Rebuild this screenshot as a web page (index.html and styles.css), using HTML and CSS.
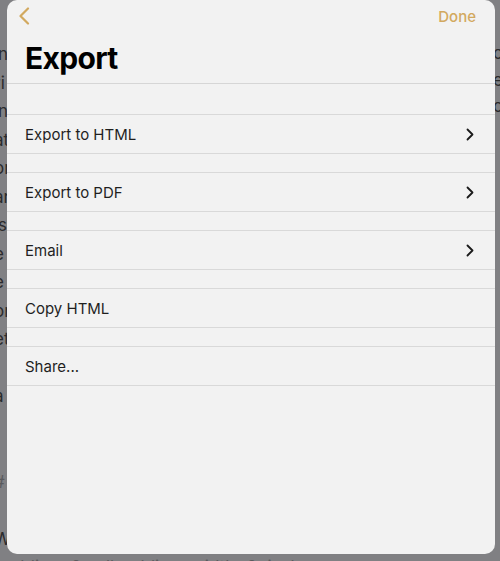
FILE: index.html
```html
<!DOCTYPE html>
<html lang="en">
<head>
    <meta charset="UTF-8">
    <title>Export</title>
    <link rel="stylesheet" href="styles.css">
</head>
<body>
<div class="behind">
    <p class="line">in</p>
    <p class="line">ri</p>
    <p class="line">inf</p>
    <p class="line">at</p>
    <p class="line">or</p>
    <p class="line">ar</p>
    <p class="line">is</p>
    <p class="line">e</p>
    <p class="line">e</p>
    <p class="line">or</p>
    <p class="line">et</p>
    <p class="line blank"></p>
    <p class="line">a</p>
    <p class="line blank"></p>
    <p class="line blank"></p>
    <p class="line faint">#</p>
    <p class="line blank"></p>
    <p class="line">W</p>
    <p class="line faint">padding=0 cellpadding=width=0pixel</p>
</div>
<div class="behind-right">
    <p class="line">o</p>
    <p class="line">e</p>
    <p class="line">c</p>
</div>

<section class="sheet">
    <div class="nav">
        <svg class="back" width="12" height="18" viewBox="0 0 12 18">
            <path d="M10 1.5 L2.5 9 L10 16.5" fill="none" stroke="#d2a95f" stroke-width="2.2" stroke-linecap="round" stroke-linejoin="round"/>
        </svg>
        <span class="done">Done</span>
    </div>
    <h1 class="title">Export</h1>
    <ul class="menu">
        <li class="item">Export to HTML
            <svg class="chev" width="8" height="13" viewBox="0 0 8 13"><path d="M1.5 1.5 L6.5 6.5 L1.5 11.5" fill="none" stroke="#1a1a1a" stroke-width="1.8" stroke-linecap="round" stroke-linejoin="round"/></svg>
        </li>
        <li class="item">Export to PDF
            <svg class="chev" width="8" height="13" viewBox="0 0 8 13"><path d="M1.5 1.5 L6.5 6.5 L1.5 11.5" fill="none" stroke="#1a1a1a" stroke-width="1.8" stroke-linecap="round" stroke-linejoin="round"/></svg>
        </li>
        <li class="item">Email
            <svg class="chev" width="8" height="13" viewBox="0 0 8 13"><path d="M1.5 1.5 L6.5 6.5 L1.5 11.5" fill="none" stroke="#1a1a1a" stroke-width="1.8" stroke-linecap="round" stroke-linejoin="round"/></svg>
        </li>
        <li class="item">Copy HTML</li>
        <li class="item">Share...</li>
    </ul>
</section>
</body>
</html>
```

FILE: styles.css
```css
* {margin:0; padding:0; list-style:none; box-sizing:border-box;}
body {background:#808083; font-family:Inter, "Liberation Sans", sans-serif; overflow:hidden; height:561px;}

/* page under the sheet */
.behind {padding-top:40px; margin-left:-6px; color:#2b2b2d;}
.behind .line {font-size:17px; line-height:28.5px; height:28.5px; white-space:nowrap;}
.behind .faint {color:#5a5a5d;}
.behind-right {position:absolute; top:40px; left:493px; color:#2b2b2d;}
.behind-right .line {font-size:17px; line-height:26.5px;}

/* sheet */
.sheet {position:absolute; left:7px; top:0; width:488px; height:554px; background:#f2f2f2; border-radius:10px;}
.nav {display:flex; justify-content:space-between; align-items:center; height:32px; padding:0 19px 0 11px;}
.back {display:block;}
.done {font-size:15px; font-weight:500; color:#d2a95f;}
.title {font-size:30px; line-height:36px; font-weight:700; color:#000; letter-spacing:-0.7px; padding:8px 18px 7px; border-bottom:1px solid #d6d6d6;}

.menu {padding-top:30px;}
.item {display:flex; justify-content:space-between; align-items:center; height:40px; padding:0 21px 0 18px; border-top:1px solid #d9d9d9; border-bottom:1px solid #d9d9d9; font-size:15px; color:#1f1f1f; margin-bottom:18px;}
.chev {display:block;}
```
